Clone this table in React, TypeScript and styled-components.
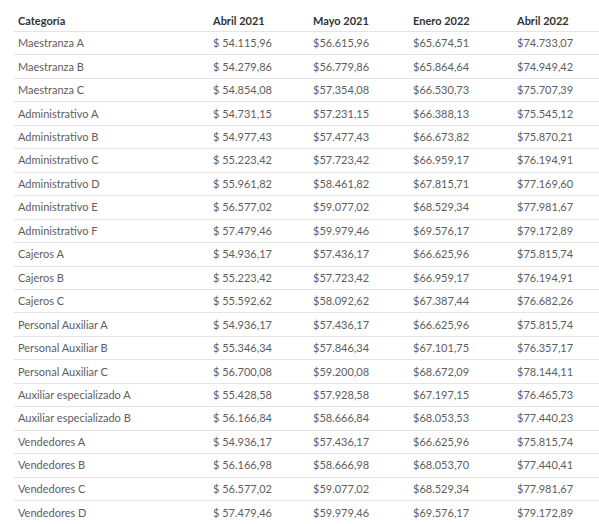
import React from "react";
import styled, { createGlobalStyle } from "styled-components";

const GlobalStyle = createGlobalStyle`
  html, body { margin: 0; padding: 0; background: #ffffff; }
  body { font-family: "Lato", "Open Sans", sans-serif; }
`;

const Wrapper = styled.div`
  padding: 0 0 0 14px;
`;

const Table = styled.table`
  width: 585px;
  border-collapse: collapse;
  table-layout: fixed;
  font-family: "Lato", "Open Sans", sans-serif;
  font-size: 11px;
`;

const HeadCell = styled.th<{ $w: number }>`
  width: ${(p) => p.$w}px;
  text-align: left;
  font-weight: 700;
  color: #333333;
  padding: 10px 0 0 4px;
  height: 31.5px;
  box-sizing: border-box;
  vertical-align: middle;
  line-height: 14px;
  border-bottom: 1px solid #e4e4e4;
`;

const Row = styled.tr`
  border-bottom: 1px solid #e4e4e4;
  &:last-child { border-bottom: none; }
`;

const Cell = styled.td`
  padding: 0 0 0 4px;
  height: 23.46px;
  box-sizing: border-box;
  color: #5e5e5e;
  line-height: 14px;
  vertical-align: middle;
  white-space: nowrap;
`;

const columns: [string, number][] = [
  ["Categoría", 195],
  ["Abril 2021", 100],
  ["Mayo 2021", 100],
  ["Enero 2022", 104],
  ["Abril 2022", 86],
];

const rows: string[][] = [
  ["Maestranza A", "$ 54.115,96", "$56.615,96", "$65.674,51", "$74.733,07"],
  ["Maestranza B", "$ 54.279,86", "$56.779,86", "$65.864,64", "$74.949,42"],
  ["Maestranza C", "$ 54.854,08", "$57.354,08", "$66.530,73", "$75.707,39"],
  ["Administrativo A", "$ 54.731,15", "$57.231,15", "$66.388,13", "$75.545,12"],
  ["Administrativo B", "$ 54.977,43", "$57.477,43", "$66.673,82", "$75.870,21"],
  ["Administrativo C", "$ 55.223,42", "$57.723,42", "$66.959,17", "$76.194,91"],
  ["Administrativo D", "$ 55.961,82", "$58.461,82", "$67.815,71", "$77.169,60"],
  ["Administrativo E", "$ 56.577,02", "$59.077,02", "$68.529,34", "$77.981,67"],
  ["Administrativo F", "$ 57.479,46", "$59.979,46", "$69.576,17", "$79.172,89"],
  ["Cajeros A", "$ 54.936,17", "$57.436,17", "$66.625,96", "$75.815,74"],
  ["Cajeros B", "$ 55.223,42", "$57.723,42", "$66.959,17", "$76.194,91"],
  ["Cajeros C", "$ 55.592,62", "$58.092,62", "$67.387,44", "$76.682,26"],
  ["Personal Auxiliar A", "$ 54.936,17", "$57.436,17", "$66.625,96", "$75.815,74"],
  ["Personal Auxiliar B", "$ 55.346,34", "$57.846,34", "$67.101,75", "$76.357,17"],
  ["Personal Auxiliar C", "$ 56.700,08", "$59.200,08", "$68.672,09", "$78.144,11"],
  ["Auxiliar especializado A", "$ 55.428,58", "$57.928,58", "$67.197,15", "$76.465,73"],
  ["Auxiliar especializado B", "$ 56.166,84", "$58.666,84", "$68.053,53", "$77.440,23"],
  ["Vendedores A", "$ 54.936,17", "$57.436,17", "$66.625,96", "$75.815,74"],
  ["Vendedores B", "$ 56.166,98", "$58.666,98", "$68.053,70", "$77.440,41"],
  ["Vendedores C", "$ 56.577,02", "$59.077,02", "$68.529,34", "$77.981,67"],
  ["Vendedores D", "$ 57.479,46", "$59.979,46", "$69.576,17", "$79.172,89"],
];

export default function App() {
  return (
    <>
      <GlobalStyle />
      <Wrapper>
        <Table>
          <thead>
            <tr>
              {columns.map(([label, w]) => (
                <HeadCell key={label} $w={w}>
                  {label}
                </HeadCell>
              ))}
            </tr>
          </thead>
          <tbody>
            {rows.map((r) => (
              <Row key={r[0]}>
                {r.map((c, i) => (
                  <Cell key={i}>{c}</Cell>
                ))}
              </Row>
            ))}
          </tbody>
        </Table>
      </Wrapper>
    </>
  );
}
